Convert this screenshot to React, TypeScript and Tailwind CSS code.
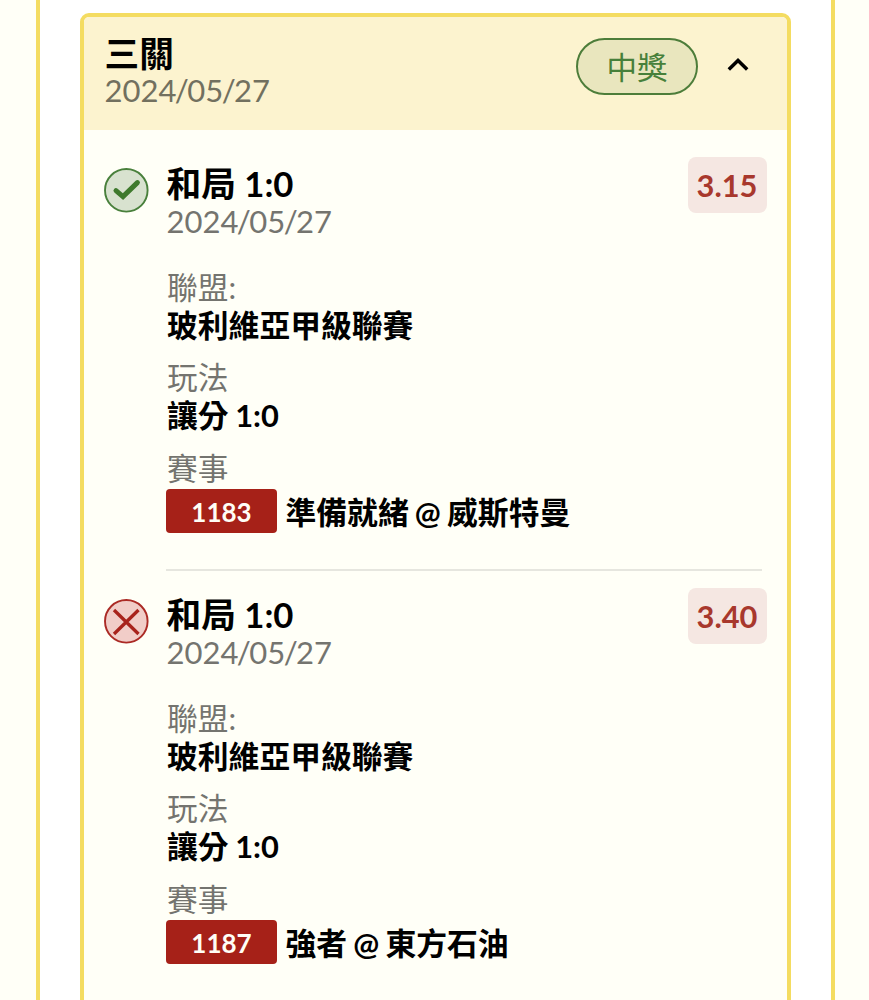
import React from "react";

type Leg = {
  won: boolean;
  title: string;
  date: string;
  odds: string;
  league: string;
  play: string;
  code: string;
  home: string;
  away: string;
};

const legs: Leg[] = [
  {
    won: true,
    title: "和局 1:0",
    date: "2024/05/27",
    odds: "3.15",
    league: "玻利維亞甲級聯賽",
    play: "讓分 1:0",
    code: "1183",
    home: "準備就緒",
    away: "威斯特曼",
  },
  {
    won: false,
    title: "和局 1:0",
    date: "2024/05/27",
    odds: "3.40",
    league: "玻利維亞甲級聯賽",
    play: "讓分 1:0",
    code: "1187",
    home: "強者",
    away: "東方石油",
  },
];

function StatusIcon({ won }: { won: boolean }) {
  return won ? (
    <svg className="block h-[45px] w-[45px]" viewBox="0 0 45 45" fill="none">
      <circle cx="22.3" cy="22.3" r="21.3" fill="#d8e2cf" stroke="#49803c" strokeWidth="1.9" />
      <path d="M12 22.6 L19 28.6 L33.4 14.6" stroke="#3f7a2d" strokeWidth="5" strokeLinecap="round" />
    </svg>
  ) : (
    <svg className="block h-[45px] w-[45px]" viewBox="0 0 45 45" fill="none">
      <circle cx="22.3" cy="22.3" r="21.3" fill="#f1cdc8" stroke="#ab2a25" strokeWidth="1.9" />
      <path d="M10 11 L34.5 35 M34.5 11 L10 35" stroke="#a8231c" strokeWidth="3.3" />
    </svg>
  );
}

function DateText({ value }: { value: string }) {
  const [year, month, day] = value.split("/");
  return (
    <>
      {year}
      <span className="-mx-[1.6px]">/</span>
      {month}
      <span className="-mx-[1.6px]">/</span>
      {day}
    </>
  );
}

function Label({ children }: { children: React.ReactNode }) {
  return <div className="h-[37px] pl-px text-[30.7px] font-normal leading-[35px] text-[#74746f]">{children}</div>;
}

function Value({ children }: { children: React.ReactNode }) {
  return <div className="h-[38px] pl-px text-[30.8px] font-bold leading-[38px] [word-spacing:-0.9px]">{children}</div>;
}

function LegItem({ leg }: { leg: Leg }) {
  return (
    <div className="flex h-[431px] pl-[20px]">
      <div className="w-[62px] shrink-0 pt-[38px]">
        <StatusIcon won={leg.won} />
      </div>
      <div className="flex min-w-0 flex-1 flex-col">
        <div className="flex justify-between pr-[20.5px]">
          <div className="pt-[35px] pl-[0.5px]">
            <div className="h-[38px] text-[34.7px] font-bold leading-[38px]">{leg.title}</div>
            <div className="h-9 text-[31px] leading-9 text-[#74746f]">
              <DateText value={leg.date} />
            </div>
          </div>
          <div className="mt-[27px] flex h-[55.5px] w-[79px] items-center justify-center rounded-lg bg-[#f5e7e2] pt-[3px] text-[30.8px] font-bold text-[#a8382d]">
            {leg.odds}
          </div>
        </div>
        <div className="mt-[30.5px] flex flex-col gap-[15.5px]">
          <div>
            <Label>聯盟:</Label>
            <Value>{leg.league}</Value>
          </div>
          <div>
            <Label>玩法</Label>
            <Value>{leg.play}</Value>
          </div>
          <div>
            <Label>賽事</Label>
            <div className="mt-px flex h-[44px] items-center">
              <span className="flex h-[44px] w-[111px] items-center justify-center rounded bg-[#a62118] pt-[3px] text-[26px] font-bold text-[#fffef6]">
                {leg.code}
              </span>
              <span className="ml-[8.5px] whitespace-nowrap pt-[4px] text-[30.8px] font-bold leading-[44px] [word-spacing:-1.3px]">
                {leg.home} @ {leg.away}
              </span>
            </div>
          </div>
        </div>
        {leg.won && <div className="mt-[36px] mr-[25px] h-[2px] shrink-0 bg-[#e6e6df]" />}
      </div>
    </div>
  );
}

export default function App() {
  return (
    <div className="h-[1000px] w-[869px] overflow-hidden bg-[#fffff7] pl-[35.5px] font-['Lato','Noto_Sans_CJK_TC',sans-serif] text-black">
      <div className="h-full w-[799px] border-x-[4px] border-[#f4dc61] bg-white px-[40.5px] pt-[13px]">
        <section className="h-[1010px] w-[711px] overflow-hidden rounded-t-[9px] border-[4px] border-[#f4dc61] bg-[#fffff7]">
          <header className="flex h-[113px] justify-between bg-[#fcf3cf] pr-[38px] pl-[20.5px]">
            <div className="pt-[18px]">
              <h1 className="h-[37px] text-[34.7px] font-bold leading-[38px]">三關</h1>
              <div className="h-9 text-[31px] leading-9 text-[#72705f]">
                <DateText value="2024/05/27" />
              </div>
            </div>
            <div className="flex pt-[21px]">
              <span className="flex h-[57px] w-[122px] items-center justify-center rounded-full border-2 border-[#4d7d3a] bg-[#e9e6be] pt-[3px] text-[30.5px] text-[#47803a]">
                中獎
              </span>
              <svg className="mt-[17.5px] ml-[29px] h-[18px] w-[22px]" viewBox="0 0 22 18" fill="none">
                <path d="M1.8 13.5 L11 4.5 L20.2 13.5" stroke="#000" strokeWidth="3.5" />
              </svg>
            </div>
          </header>
          {legs.map((leg) => (
            <LegItem key={leg.code} leg={leg} />
          ))}
        </section>
      </div>
    </div>
  );
}
